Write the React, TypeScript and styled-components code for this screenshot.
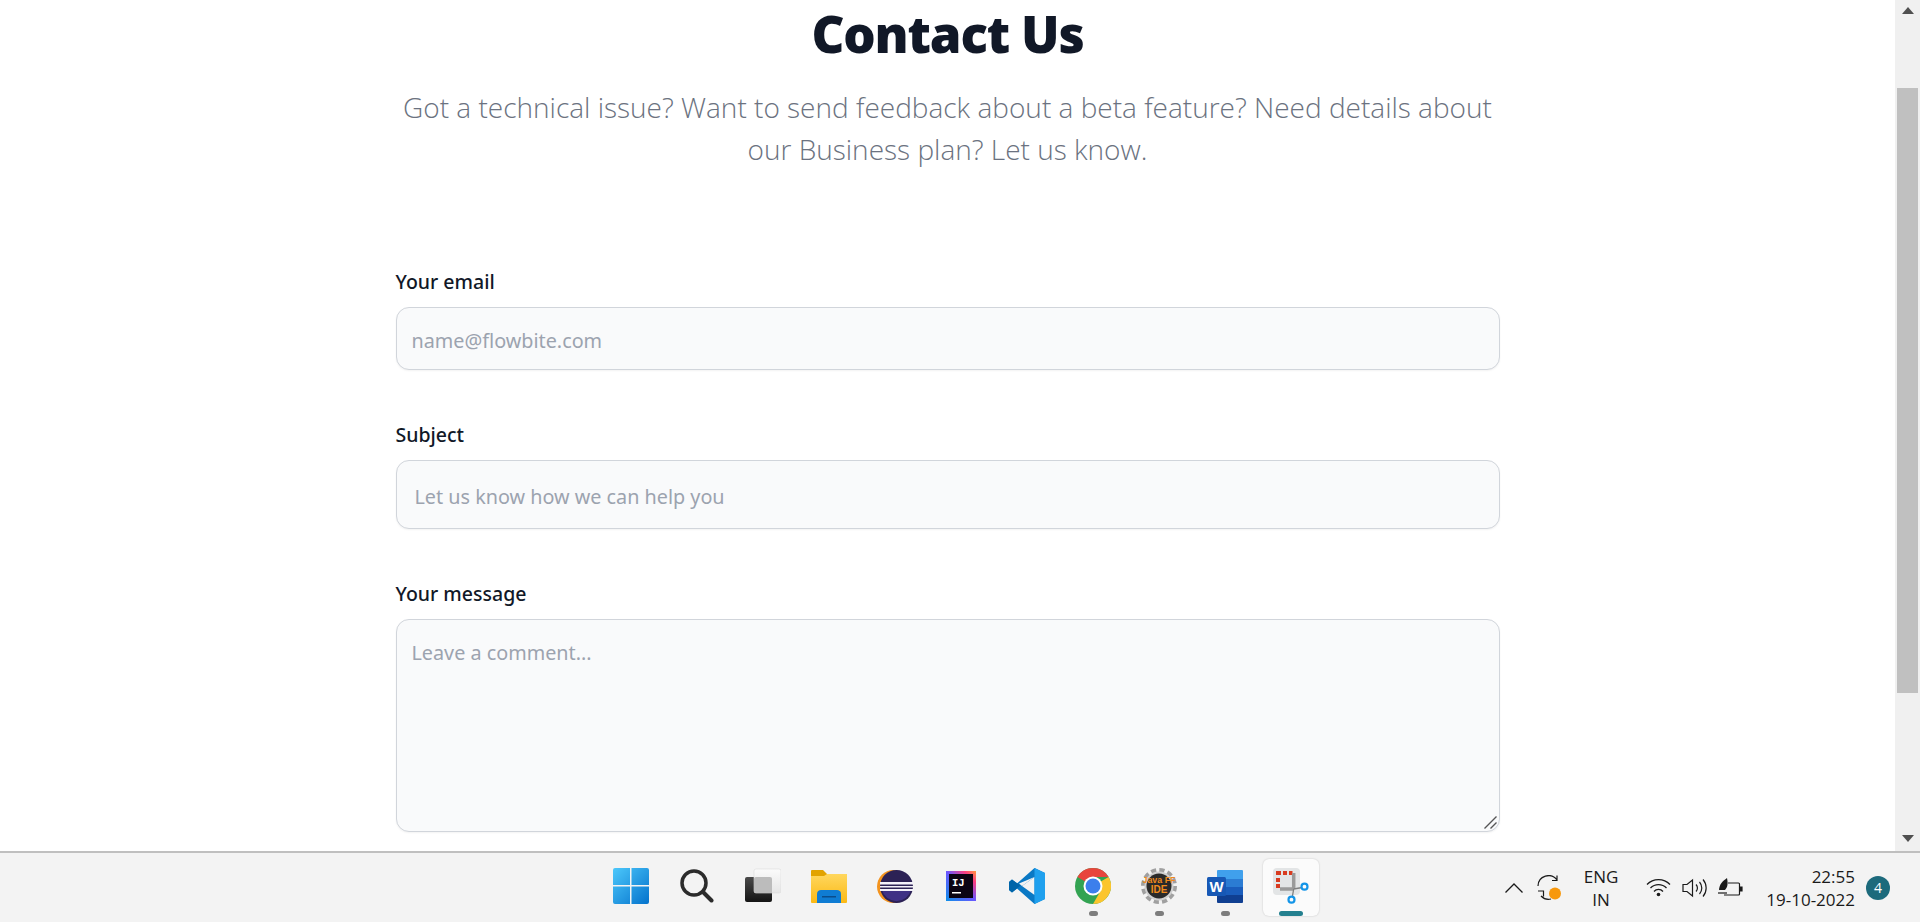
import React from "react";
import styled, { createGlobalStyle } from "styled-components";

const GlobalStyle = createGlobalStyle`
  html, body {
    margin: 0;
    padding: 0;
    height: 100%;
    overflow: hidden;
    background: #fff;
  }
  * {
    box-sizing: border-box;
  }
`;

const Screen = styled.div`
  display: flex;
  flex-direction: column;
  width: 1920px;
  height: 922px;
  font-family: "Noto Sans", "Open Sans", sans-serif;
`;

const Browser = styled.div`
  display: flex;
  height: 851px;
  overflow: hidden;
`;

const Page = styled.main`
  flex: 1;
  padding-top: 3px;
`;

const Title = styled.h1`
  margin: 0;
  text-align: center;
  font-family: "Noto Sans", sans-serif;
  font-size: 51px;
  line-height: 60px;
  font-weight: 900;
  letter-spacing: -1.200px;
  color: #111827;
`;

const Subtitle = styled.p`
  width: 1104px;
  margin: 23px auto 0;
  text-align: center;
  font-family: "Open Sans", sans-serif;
  font-size: 28px;
  line-height: 42px;
  font-weight: 300;
  color: #6b7280;
`;

const Form = styled.form`
  display: flex;
  flex-direction: column;
  width: 1104px;
  margin: 98px auto 0;
`;

const Field = styled.div<{ $gap: number }>`
  position: relative;
  margin-bottom: ${({ $gap }) => $gap}px;
`;

const Label = styled.label`
  display: block;
  height: 27px;
  margin-bottom: 12px;
  font-size: 19.5px;
  line-height: 27px;
  font-weight: 500;
  color: #111827;
`;

const fieldStyles = `
  display: block;
  width: 100%;
  border: 1.5px solid #d1d5db;
  border-radius: 13px;
  background: #f9fafb;
  box-shadow: 0 1px 2px rgba(0, 0, 0, 0.05);
  font-family: "Noto Sans", sans-serif;
  font-size: 19.8px;
  color: #111827;
  outline: none;
  &::placeholder {
    color: #9ca3af;
    opacity: 1;
  }
`;

const TextInput = styled.input<{ $height: number; $inset: number }>`
  ${fieldStyles}
  height: ${({ $height }) => $height}px;
  padding: 3px ${({ $inset }) => $inset}px 0;
`;

const MessageInput = styled.textarea`
  ${fieldStyles}
  height: 213px;
  padding: 19px 15px;
  line-height: 28px;
  resize: none;
`;

const ResizeGrip = styled.svg`
  position: absolute;
  right: 3px;
  bottom: 3px;
  width: 13px;
  height: 13px;
  stroke: #555;
  stroke-width: 1.400;
  pointer-events: none;
`;

const ScrollTrack = styled.div`
  display: flex;
  flex-direction: column;
  align-items: center;
  width: 25px;
  background: #f0f0f0;
`;

const ScrollArrow = styled.svg<{ $up?: boolean }>`
  flex: none;
  width: 12px;
  height: 8px;
  margin: ${({ $up }) => ($up ? "7px 0 0" : "0 0 9px")};
  fill: #505050;
`;

const ScrollRail = styled.div`
  flex: 1;
  width: 100%;
  padding: 73px 2px 0;
`;

const ScrollThumb = styled.div`
  height: 605px;
  background: #c0c0c0;
`;

const Taskbar = styled.footer`
  display: grid;
  grid-template-columns: 1fr auto 1fr;
  height: 71px;
  border-top: 2px solid #bfbfbf;
  background: #f3f3f3;
`;

const Apps = styled.div`
  grid-column: 2;
  display: flex;
  margin-left: 1px;
`;

const AppButton = styled.div<{ $active?: boolean }>`
  position: relative;
  display: flex;
  align-items: center;
  justify-content: center;
  width: 66px;
  height: 69px;
  padding-bottom: 3px;
  &::before {
    content: "";
    position: absolute;
    left: 5px;
    right: 5px;
    top: 6px;
    bottom: 6px;
    border-radius: 6px;
    background: ${({ $active }) => ($active ? "#fbfbfb" : "transparent")};
    box-shadow: ${({ $active }) => ($active ? "0 0 2px rgba(0,0,0,0.2)" : "none")};
  }
  svg {
    position: relative;
  }
`;

const RunDot = styled.span<{ $active?: boolean }>`
  position: absolute;
  left: 50%;
  bottom: 6px;
  width: ${({ $active }) => ($active ? 24 : 9)}px;
  height: 5px;
  margin-left: ${({ $active }) => ($active ? -12 : -4)}px;
  border-radius: 3px;
  background: ${({ $active }) => ($active ? "#24808f" : "#7d7d7d")};
`;

const Tray = styled.div`
  grid-column: 3;
  justify-self: end;
  display: flex;
  align-items: center;
  height: 69px;
  padding-right: 30px;
  color: #1a1a1a;
`;

const TrayIcon = styled.svg<{ $left: number }>`
  flex: none;
  margin-left: ${({ $left }) => $left}px;
`;

const Language = styled.div`
  width: 60px;
  margin-left: 9px;
  text-align: center;
  font-family: "Open Sans", sans-serif;
  font-size: 17px;
  line-height: 23px;
`;

const Clock = styled.div`
  width: 100px;
  margin-left: 12px;
  text-align: right;
  font-family: "Open Sans", sans-serif;
  font-size: 17px;
  line-height: 23px;
`;

const NotificationBadge = styled.div`
  flex: none;
  display: flex;
  align-items: center;
  justify-content: center;
  width: 24px;
  height: 24px;
  margin-left: 11px;
  border-radius: 50%;
  background: #1c6a7c;
  color: #fff;
  font-family: "Open Sans", sans-serif;
  font-size: 14px;
`;

const WindowsIcon = () => (
  <svg width="36" height="36" viewBox="0 0 36 36">
    <defs>
      <linearGradient id="win" x1="0" y1="0" x2="1" y2="1">
        <stop offset="0" stopColor="#4cc8fb" />
        <stop offset="1" stopColor="#0472cc" />
      </linearGradient>
    </defs>
    <path fill="url(#win)" d="M2 0h15v17H0V2a2 2 0 0 1 2-2zM18.500 0H34a2 2 0 0 1 2 2v15H18.500zM0 18.500h17V36H2a2 2 0 0 1-2-2zM18.500 18.500H36V34a2 2 0 0 1-2 2H18.500z" />
  </svg>
);

const SearchIcon = () => (
  <svg width="34" height="34" viewBox="0 0 34 34" fill="none">
    <circle cx="14" cy="14" r="12" stroke="#2b2b2b" strokeWidth="3.500" />
    <path d="M23 23l8.500 8.500" stroke="#2b2b2b" strokeWidth="4" strokeLinecap="round" />
  </svg>
);

const TaskViewIcon = () => (
  <svg width="36" height="36" viewBox="0 0 36 36">
    <defs>
      <linearGradient id="tv" x1="0" y1="0" x2="0" y2="1">
        <stop offset="0" stopColor="#4a4a4a" />
        <stop offset="1" stopColor="#141414" />
      </linearGradient>
      <linearGradient id="tvl" x1="0" y1="0" x2="0" y2="1">
        <stop offset="0" stopColor="#fbfbfb" />
        <stop offset="1" stopColor="#e6e6e6" />
      </linearGradient>
    </defs>
    <rect x="0" y="9" width="27" height="25" rx="2" fill="url(#tv)" />
    <rect x="9" y="1" width="27" height="24" rx="2" fill="url(#tvl)" stroke="#dcdcdc" strokeWidth="0.600" />
    <path d="M11 9h14a2 2 0 0 1 2 2v14H11a2 2 0 0 1-2-2v-12a2 2 0 0 1 2-2z" fill="#bcbcbc" />
  </svg>
);

const FolderIcon = () => (
  <svg width="36" height="33" viewBox="0 0 36 33">
    <defs>
      <linearGradient id="fo" x1="0" y1="0" x2="0" y2="1">
        <stop offset="0" stopColor="#ffd75e" />
        <stop offset="1" stopColor="#fbb914" />
      </linearGradient>
    </defs>
    <path d="M1 0h11l4 4h19a1 1 0 0 1 1 1v5H0V1a1 1 0 0 1 1-1z" fill="#e2a300" />
    <path d="M0 6h13l3-2h20v28a1 1 0 0 1-1 1H1a1 1 0 0 1-1-1z" fill="url(#fo)" />
    <path d="M6 33v-9c0-3 2-4 4-4h16c2 0 4 1 4 4v9z" fill="#0f7cd3" />
    <rect x="11" y="26" width="14" height="1.500" fill="#0a4d8c" />
  </svg>
);

const EclipseIcon = () => (
  <svg width="36" height="33" viewBox="0 0 36 33">
    <circle cx="16.500" cy="16.500" r="16.500" fill="#f3931e" />
    <circle cx="19.500" cy="16.500" r="16.500" fill="#2c2255" />
    <path d="M5 20h29a15 15 0 0 1-29 0z" fill="#3f3185" />
    <rect x="3" y="12" width="33" height="2.500" fill="#f4f2fa" />
    <rect x="3" y="16" width="33" height="1.500" fill="#f4f2fa" />
    <rect x="3" y="19" width="33" height="2" fill="#f4f2fa" />
  </svg>
);

const IntelliJIcon = () => (
  <svg width="30" height="30" viewBox="0 0 30 30">
    <defs>
      <linearGradient id="ij" x1="0" y1="1" x2="1" y2="0">
        <stop offset="0" stopColor="#0d8fe8" />
        <stop offset="0.500" stopColor="#6b57ff" />
        <stop offset="0.800" stopColor="#fc3e80" />
        <stop offset="1" stopColor="#ff9a3c" />
      </linearGradient>
    </defs>
    <rect width="30" height="30" fill="url(#ij)" />
    <rect x="3" y="3" width="24" height="24" fill="#0b0413" />
    <text x="6" y="15" fontFamily="Liberation Mono, monospace" fontWeight="700" fontSize="10.500" fill="#fff">
      IJ
    </text>
    <rect x="6" y="21" width="9" height="1.500" fill="#fff" />
  </svg>
);

const VsCodeIcon = () => (
  <svg width="36" height="36" viewBox="0 0 36 36">
    <path d="M25.500 0L36 5v26l-10.500 5L8 20.500l-5 4-3-2.500v-8l3-2.500 5 4z" fill="#0a78c4" />
    <path d="M25.500 9L13 18l12.500 9z" fill="#f3f3f3" />
    <path d="M3 11.500L0 14v8l3 2.500 5-4 3.500-3z" fill="#0065a9" />
    <path d="M25.500 0L36 5v26l-10.500 5z" fill="#1fa0ee" />
    <path d="M25.500 9L13 18l-3-2.500z" fill="#f3f3f3" />
  </svg>
);

const ChromeIcon = () => (
  <svg width="36" height="36" viewBox="0 0 36 36">
    <circle cx="18" cy="18" r="18" fill="#33a352" />
    <path d="M18 0a18 18 0 0 1 15.600 9H18a9 9 0 0 0-7.800 4.500L2.400 9A18 18 0 0 1 18 0z" fill="#e8453c" />
    <path d="M33.600 9A18 18 0 0 1 18 36l7.800-13.500a9 9 0 0 0 0-9z" fill="#fbc52d" />
    <circle cx="18" cy="18" r="9.500" fill="#fff" />
    <circle cx="18" cy="18" r="7.500" fill="#3c7fec" />
  </svg>
);

const JavaFxIcon = () => (
  <svg width="36" height="36" viewBox="0 0 36 36">
    <circle cx="18" cy="18" r="15.500" fill="none" stroke="#a0a0a0" strokeWidth="5" strokeDasharray="5 3.100" />
    <circle cx="18" cy="18" r="14.500" fill="#d0d0d0" />
    <circle cx="18" cy="18" r="12.500" fill="#2a2a2a" />
    <text x="18" y="15" textAnchor="middle" fontFamily="Liberation Sans, sans-serif" fontWeight="700" fontSize="8.500" textLength="33" lengthAdjust="spacingAndGlyphs" fill="#f08a1c">
      Java FF
    </text>
    <text x="18" y="25" textAnchor="middle" fontFamily="Liberation Sans, sans-serif" fontWeight="700" fontSize="10" fill="#f08a1c">
      IDE
    </text>
  </svg>
);

const WordIcon = () => (
  <svg width="36" height="33" viewBox="0 0 36 33">
    <path d="M10 1a1 1 0 0 1 1-1h24a1 1 0 0 1 1 1v8H10z" fill="#40a0ec" />
    <rect x="10" y="9" width="26" height="8" fill="#2b7cd3" />
    <rect x="10" y="17" width="26" height="8" fill="#1a5dbc" />
    <path d="M10 25h26v7a1 1 0 0 1-1 1H11a1 1 0 0 1-1-1z" fill="#103f91" />
    <rect x="0" y="7" width="19" height="19" rx="1.500" fill="#1758b5" />
    <text x="9.500" y="22" textAnchor="middle" fontFamily="Liberation Sans, sans-serif" fontWeight="700" fontSize="15" fill="#fff">
      W
    </text>
  </svg>
);

const SnipIcon = () => (
  <svg width="36" height="36" viewBox="0 0 36 36" fill="none">
    <rect x="0" y="0" width="27" height="27" rx="4" fill="#e3e5e6" />
    <path d="M3 3h5v4H3zM10 3h4v4h-4zM16 3h3.500v4H16zM3 10h4v4H3zM3 16h4v4H3z" fill="#d83b20" />
    <path d="M20.700 5v16M7 21h14" stroke="#9a9a9a" strokeWidth="3.500" />
    <path d="M20.700 21l8.500-1.500M20.700 21l-1.500 8.500" stroke="#7f7f7f" strokeWidth="1.300" />
    <circle cx="31.500" cy="18.700" r="3" stroke="#1495e8" strokeWidth="2.200" fill="#fbfbfb" />
    <circle cx="18.500" cy="31.700" r="3" stroke="#1495e8" strokeWidth="2.200" fill="#fbfbfb" />
  </svg>
);

const apps = [
  { key: "start", icon: <WindowsIcon /> },
  { key: "search", icon: <SearchIcon /> },
  { key: "taskview", icon: <TaskViewIcon /> },
  { key: "explorer", icon: <FolderIcon /> },
  { key: "eclipse", icon: <EclipseIcon /> },
  { key: "intellij", icon: <IntelliJIcon /> },
  { key: "vscode", icon: <VsCodeIcon /> },
  { key: "chrome", icon: <ChromeIcon />, running: true },
  { key: "javafx", icon: <JavaFxIcon />, running: true },
  { key: "word", icon: <WordIcon />, running: true },
  { key: "snip", icon: <SnipIcon />, active: true },
];

export default function App() {
  return (
    <Screen>
      <GlobalStyle />
      <Browser>
        <Page>
          <Title>Contact Us</Title>
          <Subtitle>
            Got a technical issue? Want to send feedback about a beta feature? Need details about our Business plan? Let us know.
          </Subtitle>
          <Form>
            <Field $gap={51}>
              <Label htmlFor="email">Your email</Label>
              <TextInput id="email" type="email" placeholder="name@flowbite.com" $height={63} $inset={15} />
            </Field>
            <Field $gap={51}>
              <Label htmlFor="subject">Subject</Label>
              <TextInput id="subject" type="text" placeholder="Let us know how we can help you" $height={69} $inset={18} />
            </Field>
            <Field $gap={0}>
              <Label htmlFor="message">Your message</Label>
              <MessageInput id="message" placeholder="Leave a comment..." />
              <ResizeGrip viewBox="0 0 13 13">
                <path d="M0.500 12.500L12.500 0.500M6.500 12.500L12.500 6.500" />
              </ResizeGrip>
            </Field>
          </Form>
        </Page>
        <ScrollTrack>
          <ScrollArrow viewBox="0 0 12 8" $up>
            <path d="M6 0l6 7H0z" />
          </ScrollArrow>
          <ScrollRail>
            <ScrollThumb />
          </ScrollRail>
          <ScrollArrow viewBox="0 0 12 8">
            <path d="M0 1h12L6 8z" />
          </ScrollArrow>
        </ScrollTrack>
      </Browser>
      <Taskbar>
        <Apps>
          {apps.map((app) => (
            <AppButton key={app.key} $active={app.active}>
              {app.icon}
              {(app.running || app.active) && <RunDot $active={app.active} />}
            </AppButton>
          ))}
        </Apps>
        <Tray>
          <TrayIcon $left={0} width="18" height="10" viewBox="0 0 18 10" fill="none" stroke="#1a1a1a" strokeWidth="1.300">
            <path d="M0.500 9.500L9 1l8.500 8.500" />
          </TrayIcon>
          <TrayIcon $left={14} width="25" height="25" viewBox="0 0 25 25" fill="none" stroke="#1a1a1a" strokeWidth="1.200">
            <path d="M1 11A10.500 10.500 0 0 1 20 5M20 0.500V5.500H15" />
            <path d="M4 21A10.500 10.500 0 0 0 14 24M1 16h5.500v5.500" />
            <circle cx="18" cy="18.500" r="6" fill="#f7980d" stroke="none" />
          </TrayIcon>
          <Language>
            ENG
            <br />
            IN
          </Language>
          <TrayIcon $left={15} width="25" height="19" viewBox="0 0 25 19" fill="none" stroke="#1a1a1a" strokeWidth="1.300">
            <path d="M1 6.500a16 16 0 0 1 23 0M4.500 10a11 11 0 0 1 16 0M8 13.500a6 6 0 0 1 9 0" />
            <circle cx="12.500" cy="16.500" r="1.800" fill="#1a1a1a" stroke="none" />
          </TrayIcon>
          <TrayIcon $left={11} width="25" height="20" viewBox="0 0 25 20" fill="none" stroke="#1a1a1a" strokeWidth="1.200">
            <path d="M1 6.500h4L10.500 2v16L5 13.500H1z" />
            <path d="M14 6.500a5 5 0 0 1 0 7M17.500 4a9 9 0 0 1 0 12M21 1.500a13 13 0 0 1 0 17" />
          </TrayIcon>
          <TrayIcon $left={11} width="25" height="19" viewBox="0 0 25 19" fill="none" stroke="#1a1a1a" strokeWidth="1.200">
            <path d="M10 5h10.500a1 1 0 0 1 1 1v10a1 1 0 0 1-1 1H6" />
            <path d="M21.500 9h2.500v4h-2.500" fill="#1a1a1a" />
            <path d="M1 13C1 6 5 3 9 0c1 5 1 9-2 12H1z" fill="#1a1a1a" stroke="none" />
            <path d="M0 15h9" />
          </TrayIcon>
          <Clock>
            22:55
            <br />
            19-10-2022
          </Clock>
          <NotificationBadge>4</NotificationBadge>
        </Tray>
      </Taskbar>
    </Screen>
  );
}
